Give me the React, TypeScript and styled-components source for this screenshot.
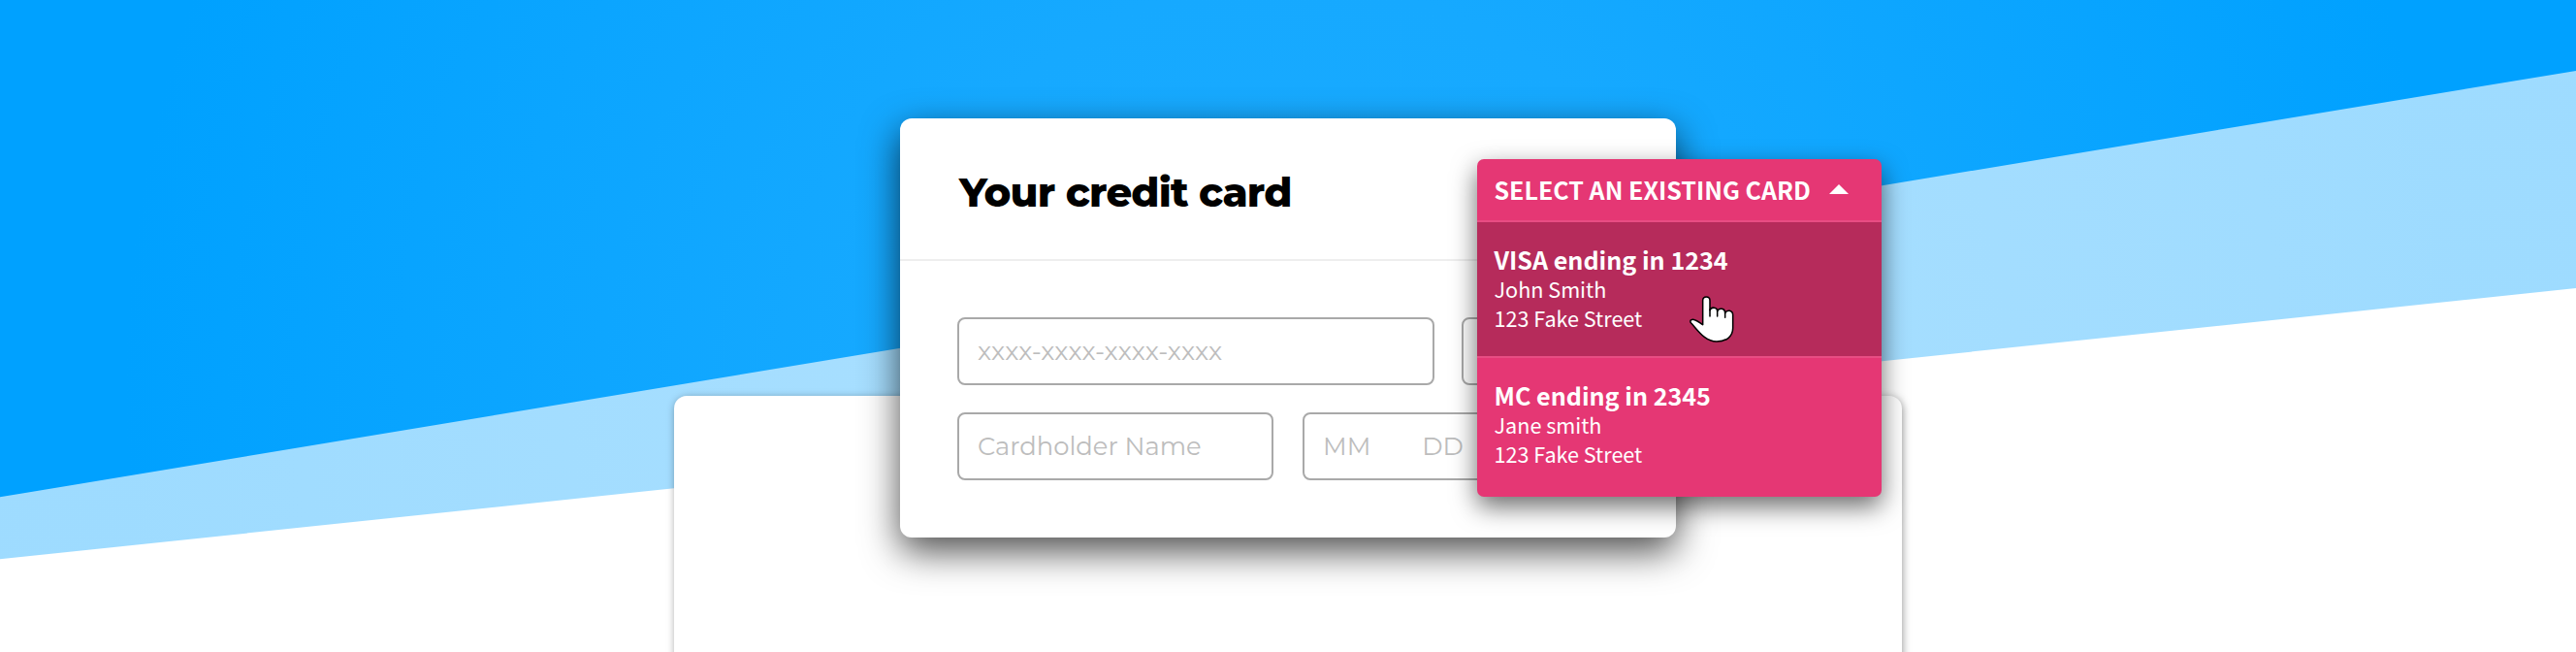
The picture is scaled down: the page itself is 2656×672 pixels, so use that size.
import React from "react";
import styled, { createGlobalStyle } from "styled-components";

const GlobalStyle = createGlobalStyle`
  *, *::before, *::after { box-sizing: border-box; }
  body { margin: 0; background: #fff; }
`;

const headingFont = `Montserrat, Inter, sans-serif`;
const menuFont = `"Noto Sans CJK JP", "Noto Sans", sans-serif`;

const Stage = styled.main`
  display: grid;
  grid-template: 672px / 1fr;
  justify-items: center;
  width: 100%;
  height: 672px;
  overflow: hidden;

  > * {
    grid-area: 1 / 1;
  }
`;

const Backdrop = styled.svg`
  display: block;
  width: 100%;
  height: 672px;
`;

const Page = styled.section`
  width: 1266px;
  height: 300px;
  margin-top: 408px;
  border-radius: 13px;
  background: #fff;
  box-shadow: 1px 2px 8px rgba(0, 0, 0, 0.38);
`;

const Card = styled.section`
  position: relative;
  display: flex;
  flex-direction: column;
  width: 800px;
  height: 432px;
  margin-top: 122px;
  border-radius: 12px;
  background: #fff;
  box-shadow: 0 14px 38px rgba(0, 0, 0, 0.7);
`;

const CardHeader = styled.header`
  display: flex;
  align-items: center;
  height: 147px;
  padding: 7px 61px 0;
  border-bottom: 2px solid #eee;
`;

const Title = styled.h1`
  margin: 0;
  font: 800 41.8px/48px ${headingFont};
  letter-spacing: -0.85px;
  color: #000;
`;

const Form = styled.form`
  display: flex;
  flex-direction: column;
  gap: 28px;
  padding: 58px 59px 0;
`;

const FieldRow = styled.div<{ $gap: number }>`
  display: flex;
  gap: ${({ $gap }) => $gap}px;
`;

const Field = styled.div<{ $width?: number; $size?: number }>`
  display: flex;
  align-items: center;
  gap: 53px;
  flex: ${({ $width }) => ($width ? `0 0 ${$width}px` : "1")};
  height: 70px;
  padding: 0 19px;
  border: 2px solid #a9a9a9;
  border-radius: 8px;
  font: 400 ${({ $size = 25.8 }) => $size}px/32px ${headingFont};
  color: #bdbdbd;
  white-space: nowrap;
`;

const Menu = styled.div`
  position: absolute;
  top: 42px;
  left: 595px;
  width: 417px;
  height: 348px;
  border-radius: 7px;
  background: #e53774;
  box-shadow: 0 10px 26px rgba(0, 0, 0, 0.58);
  color: #fff;
  font-family: ${menuFont};
`;

const MenuHeader = styled.div`
  display: flex;
  align-items: center;
  gap: 19px;
  height: 65px;
  padding: 0 17.5px 1px;
  border-bottom: 2px solid #e84d83;
  font-size: 25px;
  font-weight: 700;
  line-height: 32px;
  white-space: nowrap;
`;

const Arrow = styled.svg`
  width: 20px;
  height: 10px;
`;

const Option = styled.div<{ $active?: boolean }>`
  height: 140px;
  padding: 22px 18px 0 17.5px;
  background: ${({ $active }) => ($active ? "#b62b5b" : "transparent")};
  border-bottom: 2px solid ${({ $active }) => ($active ? "#e84d83" : "transparent")};
`;

const OptionTitle = styled.div`
  font-size: 25.1px;
  font-weight: 700;
  line-height: 32px;
`;

const OptionLine = styled.div`
  font-size: 21.6px;
  line-height: 30px;
`;

const Cursor = styled.svg`
  position: absolute;
  top: 139px;
  left: 217px;
  width: 50px;
  height: 50px;
`;

const cards = [
  { title: "VISA ending in 1234", name: "John Smith", address: "123 Fake Street" },
  { title: "MC ending in 2345", name: "Jane smith", address: "123 Fake Street" },
];

export default function App() {
  return (
    <>
      <GlobalStyle />
      <Stage>
        <Backdrop viewBox="0 0 2656 672" preserveAspectRatio="none" aria-hidden="true">
          <defs>
            <radialGradient id="sky" gradientUnits="userSpaceOnUse" cx="1328" cy="400" r="1200">
              <stop offset="0" stopColor="#1aabff" />
              <stop offset="0.35" stopColor="#16a9ff" />
              <stop offset="1" stopColor="#00a1ff" />
            </radialGradient>
          </defs>
          <path d="M0 0H2656V297L0 576.3Z" fill="url(#sky)" opacity="0.38" />
          <path d="M0 0H2656V72.9L0 512.3Z" fill="url(#sky)" />
        </Backdrop>
        <Page />
        <Card>
          <CardHeader>
            <Title>Your credit card</Title>
          </CardHeader>
          <Form>
            <FieldRow $gap={28}>
              <Field $width={492} $size={26.4}>
                xxxx-xxxx-xxxx-xxxx
              </Field>
              <Field />
            </FieldRow>
            <FieldRow $gap={30}>
              <Field $width={326}>Cardholder Name</Field>
              <Field>
                <span>MM</span>
                <span>DD</span>
              </Field>
            </FieldRow>
          </Form>
          <Menu>
            <MenuHeader>
              SELECT AN EXISTING CARD
              <Arrow viewBox="0 0 20 10" aria-hidden="true">
                <path d="M10 0L20 10H0Z" fill="#fff" />
              </Arrow>
            </MenuHeader>
            {cards.map((card, i) => (
              <Option key={card.title} $active={i === 0}>
                <OptionTitle>{card.title}</OptionTitle>
                <OptionLine>{card.name}</OptionLine>
                <OptionLine>{card.address}</OptionLine>
              </Option>
            ))}
            <Cursor viewBox="60 40 150 150" aria-hidden="true">
              <path
                d="M107 135V60C107 45 129 45 129 60V90C133 79 152 80 152 93C157 82 176 83 176 99C181 87 200 90 200 105V146C200 171 180 187 150 187C114 187 94 155 71 130C64 122 73 117 82 120C92 123 98 129 107 135Z"
                fill="#fff"
                stroke="#000"
                strokeWidth="4.6"
                strokeLinejoin="round"
              />
              <path
                d="M129 88V109M152 92V109M176 97V113"
                fill="none"
                stroke="#000"
                strokeWidth="4.6"
                strokeLinecap="round"
              />
            </Cursor>
          </Menu>
        </Card>
      </Stage>
    </>
  );
}
